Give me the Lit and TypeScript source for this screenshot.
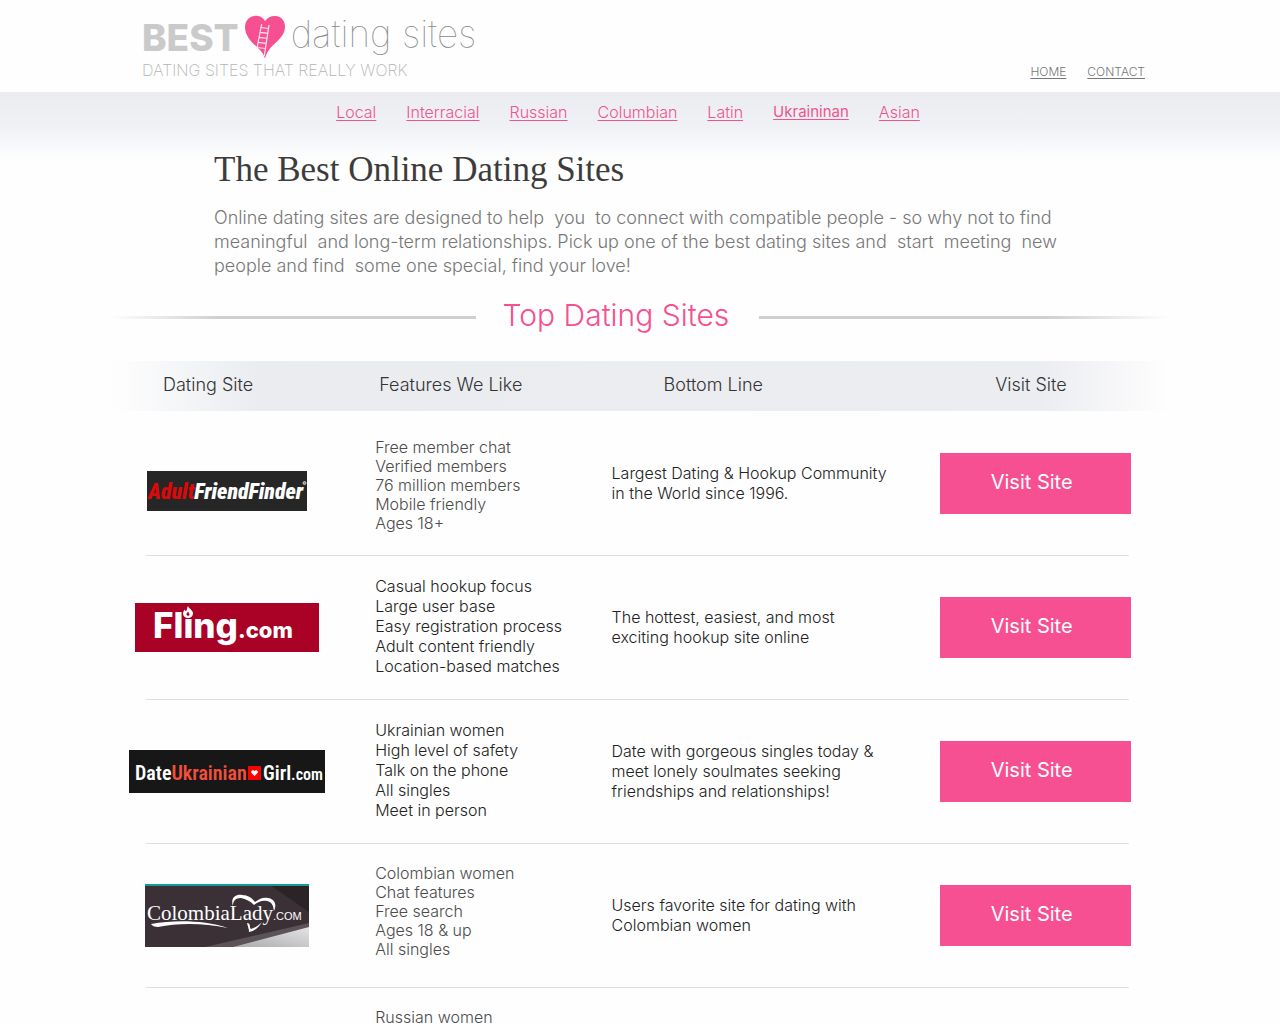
import { LitElement, html, css, nothing } from "lit";
import { customElement } from "lit/decorators.js";

interface Site {
  logo: unknown;
  tone: string;
  features: string[];
  summary: string[];
}

const friendFinder = html`<svg class="brand" width="160" height="40" viewBox="0 0 160 40" role="img" aria-label="AdultFriendFinder">
  <rect width="160" height="40" fill="#262626" />
  <text class="impact" x="1" y="28" fill="#d80a0a">Adult<tspan fill="#fff">FriendFinder</tspan></text>
  <circle cx="157.500" cy="12" r="1.500" fill="#888" stroke="#ddd" stroke-width="0.800" />
</svg>`;

const fling = html`<svg class="brand" width="184" height="49" viewBox="0 0 184 49" role="img" aria-label="Fling.com">
  <rect width="184" height="49" fill="#aa0226" />
  <text class="round" x="18" y="35" fill="#fff">Flıng<tspan class="round-small">.com</tspan></text>
  <path d="M53 3c1 3 5 4 5 7.500a5 4.500 0 0 1-10 0c0-2 1-3 2-4 0 1 .5 1.500 1 1.500C52.500 7 51.500 5 53 3z" fill="#fff" />
  <path d="M53 8.500c.3 1.200 1.500 1.500 1.500 2.700a1.500 1.500 0 0 1-3 0c0-1.200 1.200-1.500 1.500-2.700z" fill="#aa0226" />
</svg>`;

const ukrainianGirl = html`<svg class="brand" width="196" height="43" viewBox="0 0 196 43" role="img" aria-label="DateUkrainianGirl.com">
  <rect width="196" height="43" fill="#171717" />
  <text class="narrow" x="6" y="30" fill="#fff">Date<tspan fill="#f0503c">Ukrainian</tspan></text>
  <rect x="119" y="16" width="13" height="14" fill="#f00" />
  <path d="M125.500 26l-3-3a1.700 1.700 0 0 1 3-1.800 1.700 1.700 0 0 1 3 1.800z" fill="#fff" />
  <text class="narrow" x="134" y="30" fill="#fff">Girl<tspan class="narrow-small">.com</tspan></text>
</svg>`;

const colombiaLady = html`<svg class="brand" width="164" height="63" viewBox="0 0 164 63" role="img" aria-label="ColombiaLady.com">
  <defs>
    <linearGradient id="silver" x1="0" y1="1" x2="1" y2="0">
      <stop offset="0" stop-color="#aaaaad" />
      <stop offset="1" stop-color="#e4e4e6" />
    </linearGradient>
  </defs>
  <rect width="164" height="63" fill="#3a3035" />
  <path d="M125 1l39 27V1z" fill="#2b2427" />
  <path d="M60 63L164 39v6L92 63z" fill="#5b5357" />
  <path d="M88 63L164 43v20z" fill="url(#silver)" />
  <rect width="164" height="2" fill="#159a98" />
  <path d="M88 22c-3-8 3-12 9-11 6 0 10 3 13 7 5-4 9-5 13-4 7 1 9 7 6 13-1-6-2-9-7-10-5-1-9 1-13 4-4-4-8-6-13-7-6 0-8 3-8 8z" fill="#fff" />
  <path d="M102 39c4 0 2 4 4 6 4-1 8-4 11-7-3 5-7 9-13 10 0-3-1-5-2-9z" fill="#fff" />
  <path d="M6 40c24-4 52-4 77 4-25-5-50-5-70-1-3 0-6-1-7-3z" fill="#fff" />
  <text class="antique" x="2" y="36" fill="#fff">ColombiaLady<tspan class="antique-small">.COM</tspan></text>
</svg>`;

const sites: Site[] = [
  {
    logo: friendFinder,
    tone: "soft",
    features: ["Free member chat", "Verified members", "76 million members", "Mobile friendly", "Ages 18+"],
    summary: ["Largest Dating & Hookup Community", "in the World since 1996."],
  },
  {
    logo: fling,
    tone: "strong",
    features: ["Casual hookup focus", "Large user base", "Easy registration process", "Adult content friendly", "Location-based matches"],
    summary: ["The hottest, easiest, and most", "exciting hookup site online"],
  },
  {
    logo: ukrainianGirl,
    tone: "strong",
    features: ["Ukrainian women", "High level of safety", "Talk on the phone", "All singles", "Meet in person"],
    summary: ["Date with gorgeous singles today &", "meet lonely soulmates seeking", "friendships and relationships!"],
  },
  {
    logo: colombiaLady,
    tone: "soft",
    features: ["Colombian women", "Chat features", "Free search", "Ages 18 & up", "All singles"],
    summary: ["Users favorite site for dating with", "Colombian women"],
  },
];

@customElement("app-root")
export class AppRoot extends LitElement {
  static styles = css`
    :host {
      display: block;
      background: #fefefe;
      color: #333;
      font-family: Inter, "Liberation Sans", sans-serif;
      font-weight: 300;
      font-size: 16px;
      line-height: 20px;
    }
    .masthead {
      box-sizing: border-box;
      max-width: 1010px;
      min-height: 92px;
      margin: 0 auto;
      padding: 12px 0;
      display: flex;
      justify-content: space-between;
      align-items: flex-end;
    }
    .home {
      display: block;
      padding-left: 7px;
      color: #c0c0c0;
      text-decoration: none;
    }
    .wordmark {
      display: flex;
      align-items: flex-start;
      gap: 6px;
      height: 48px;
    }
    .best {
      padding-top: 4px;
      font-size: 37px;
      line-height: 44px;
      font-weight: 800;
      color: #cacaca;
    }
    .heart {
      display: block;
      margin-top: 3px;
    }
    .rest {
      font-size: 37px;
      line-height: 44px;
      font-weight: 100;
      color: #888;
    }
    .tagline {
      display: block;
      font-size: 16px;
      line-height: 20px;
      font-weight: 200;
      color: #b4b4b4;
    }
    .utility {
      display: flex;
      gap: 21px;
      font-size: 12px;
      line-height: 16px;
    }
    .utility a {
      color: #777;
      text-underline-offset: 2px;
    }
    .band {
      background: linear-gradient(#eaecf0, #eff1f5 50%, #fefefe);
      height: 68px;
    }
    .topics {
      display: flex;
      flex-wrap: wrap;
      justify-content: center;
      gap: 30px;
      padding: 10px 24px 0 0;
    }
    .topics a {
      color: #f0548f;
      text-underline-offset: 2px;
    }
    .topics .current {
      font-size: 15px;
      font-weight: 400;
    }
    .intro {
      box-sizing: border-box;
      max-width: 852px;
      margin: 0 auto;
      margin-top: -12px;
    }
    h1 {
      margin: 0;
      font-family: "Liberation Serif", serif;
      font-weight: 400;
      font-size: 35px;
      line-height: 44px;
      color: #3c3c3c;
    }
    .lead {
      margin: 14px 0 0;
      font-size: 18px;
      line-height: 24px;
      color: #777;
      white-space: pre-line;
    }
    .board {
      max-width: 1060px;
      margin: 0 auto;
    }
    .divider {
      display: grid;
      grid-template-columns: 365fr auto 410fr;
      align-items: center;
      padding: 17px 0 26px;
    }
    .rule {
      height: 3px;
      margin-top: 4px;
      background: linear-gradient(90deg, #fefefe, #cfcfcf 30%);
    }
    .rule.right {
      background: linear-gradient(270deg, #fefefe, #cfcfcf 30%);
    }
    h2 {
      margin: 0;
      padding: 0 30px 0 27px;
      font-weight: 300;
      font-size: 30px;
      line-height: 40px;
      color: #f55090;
    }
    table {
      width: 100%;
      table-layout: fixed;
      border-collapse: collapse;
    }
    .col-logo { width: 22%; }
    .col-features { width: 22.3%; }
    .col-summary { width: 31%; }
    .head {
      background: linear-gradient(90deg, #fefefe, #eaecf0 14%, #ecedf1 88%, #fefefe);
    }
    th {
      padding: 0 0 2px;
      height: 48px;
      font-size: 18px;
      line-height: 24px;
      font-weight: 300;
      text-align: left;
    }
    .th-logo { padding-left: 53px; }
    .th-features { padding-left: 36px; }
    .th-summary { padding-left: 84px; }
    .th-visit { padding-left: 87px; }
    .site {
      height: 144px;
    }
    .site + .site {
      background: linear-gradient(#dedede, #dedede) no-repeat 36px 0 / calc(100% - 77px) 1px;
    }
    .site.partial {
      height: 36px;
    }
    td {
      padding: 0 0 0 32px;
      vertical-align: middle;
    }
    .cell-logo {
      padding: 0;
    }
    .site:first-child .cell-logo {
      padding-top: 16px;
    }
    .brand {
      display: block;
      margin: 0 auto;
      overflow: visible;
    }
    .cell-features {
      padding-top: 21px;
      vertical-align: top;
    }
    .site:first-child .cell-features {
      padding-top: 27px;
    }
    ul {
      margin: 0;
      padding: 0;
      list-style: none;
    }
    .soft {
      color: #4c4c4c;
      line-height: 19px;
    }
    .strong {
      color: #222;
    }
    .summary {
      display: block;
      color: #222;
    }
    .visit {
      box-sizing: border-box;
      display: block;
      width: 191px;
      height: 61px;
      padding: 0 8px 3px 0;
      border: 0;
      background: #f65092;
      color: #fff;
      font: inherit;
      font-size: 20px;
      font-weight: 400;
      line-height: 24px;
    }
    .impact {
      font-family: "Roboto Condensed", "Liberation Sans Narrow", Roboto, sans-serif;
      font-size: 22px;
      font-weight: 900;
      font-style: italic;
    }
    .round {
      font-family: Inter, sans-serif;
      font-size: 35px;
      font-weight: 800;
    }
    .round-small {
      font-size: 22px;
    }
    .narrow {
      font-family: "Roboto Condensed", "Liberation Sans Narrow", "Open Sans Condensed", sans-serif;
      font-size: 20px;
      font-weight: 600;
    }
    .narrow-small {
      font-size: 16px;
    }
    .antique {
      font-family: "Liberation Serif", serif;
      font-size: 21px;
    }
    .antique-small {
      font-family: "Liberation Sans", sans-serif;
      font-size: 11px;
    }
  `;

  private renderHeart() {
    return html`<svg class="heart" width="40" height="44" viewBox="0 0 40 44" aria-hidden="true">
      <path d="M20 6C17 1 12 .5 9 1 3 2 0 7 0 12c0 11 10 18 14 22 3 3 5 6 6 9.500 1-3.500 2-6 5-10C29 28 40 22 40 12 40 6 37 2 31 1c-4-.6-8 1-11 5z" fill="#f65092" />
      <path
        d="M16.700 9L12 33M24 10l-4.700 31M16 12.500l7.600 1M15 17.300l8 1M14 22.300l8 1M13 27.300l8.300 1M12 32.500l8.500 1"
        stroke="#ffe4ef" stroke-width="1.200" fill="none" />
    </svg>`;
  }

  private renderSite(site: Site) {
    return html`<tr class="site">
      <td class="cell-logo">${site.logo}</td>
      <td class="cell-features"><ul class=${site.tone}>${site.features.map((f) => html`<li>${f}</li>`)}</ul></td>
      <td>${site.summary.map((line) => html`<span class="summary">${line}</span>`)}</td>
      <td><button class="visit" type="button">Visit Site</button></td>
    </tr>`;
  }

  render() {
    const topics = ["Local", "Interracial", "Russian", "Columbian", "Latin", "Ukraininan", "Asian"];
    const lead = [
      "Online dating sites are designed to help \u00a0you \u00a0to connect with compatible people - so why not to find",
      "meaningful \u00a0and long-term relationships. Pick up one of the best dating sites and \u00a0start \u00a0meeting \u00a0new",
      "people and find \u00a0some one special, find your love!",
    ].join("\n");
    return html`
      <header class="masthead">
        <a class="home" href="#">
          <span class="wordmark"><span class="best">BEST</span>${this.renderHeart()}<span class="rest">dating sites</span></span>
          <span class="tagline">DATING SITES THAT REALLY WORK</span>
        </a>
        <nav class="utility"><a href="#">HOME</a><a href="#">CONTACT</a></nav>
      </header>
      <div class="band">
        <nav class="topics">
          ${topics.map((t) => html`<a href="#" class=${t === "Ukraininan" ? "current" : nothing}>${t}</a>`)}
        </nav>
      </div>
      <main>
        <section class="intro">
          <h1>The Best Online Dating Sites</h1>
          <p class="lead">${lead}</p>
        </section>
        <section class="board">
          <div class="divider"><span class="rule"></span><h2>Top Dating Sites</h2><span class="rule right"></span></div>
          <table>
            <colgroup><col class="col-logo" /><col class="col-features" /><col class="col-summary" /><col /></colgroup>
            <thead>
              <tr class="head">
                <th class="th-logo">Dating Site</th>
                <th class="th-features">Features We Like</th>
                <th class="th-summary">Bottom Line</th>
                <th class="th-visit">Visit Site</th>
              </tr>
            </thead>
            <tbody>
              ${sites.map((s) => this.renderSite(s))}
              <tr class="site partial">
                <td></td>
                <td class="cell-features"><ul class="soft"><li>Russian women</li></ul></td>
                <td></td>
                <td></td>
              </tr>
            </tbody>
          </table>
        </section>
      </main>
    `;
  }
}
